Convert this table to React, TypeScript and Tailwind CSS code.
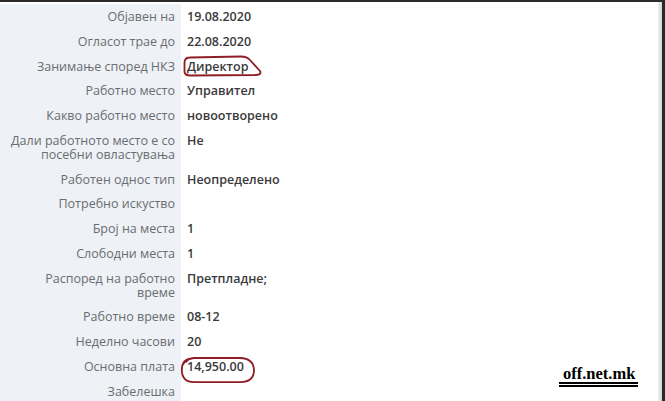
import React from "react";

type Row = { label: string[]; value?: string; mark?: "dir" | "pay" };

const rows: Row[] = [
  { label: ["Објавен на"], value: "19.08.2020" },
  { label: ["Огласот трае до"], value: "22.08.2020" },
  { label: ["Занимање според НКЗ"], value: "Директор", mark: "dir" },
  { label: ["Работно место"], value: "Управител" },
  { label: ["Какво работно место"], value: "новоотворено" },
  { label: ["Дали работното место е со", "посебни овластувања"], value: "Не" },
  { label: ["Работен однос тип"], value: "Неопределено" },
  { label: ["Потребно искуство"] },
  { label: ["Број на места"], value: "1" },
  { label: ["Слободни места"], value: "1" },
  { label: ["Распоред на работно", "време"], value: "Претпладне;" },
  { label: ["Работно време"], value: "08-12" },
  { label: ["Неделно часови"], value: "20" },
  { label: ["Основна плата"], value: "14,950.00", mark: "pay" },
  { label: ["Забелешка"] },
];

function DirMark() {
  return (
    <svg
      className="absolute left-[-5px] top-[-6px] pointer-events-none"
      width="82"
      height="26"
      viewBox="0 0 82 26"
      fill="none"
    >
      <path
        d="M8 3.5 Q3 3.5 2.5 8 L2.5 18 Q3 21.5 8 21.5 L74 21 Q80 20.5 78 17 L68 6 Q65 2.5 59 2.5 L8 3.5"
        stroke="#8e1d24"
        strokeWidth="1.8"
        strokeLinejoin="round"
        strokeLinecap="round"
      />
    </svg>
  );
}

function PayMark() {
  return (
    <svg
      className="absolute left-[-7px] top-[-4px] pointer-events-none"
      width="76"
      height="28"
      viewBox="0 0 76 28"
      fill="none"
    >
      <path
        d="M12 2.5 Q2 3 1.8 14 Q2 26 14 26.2 L60 26.2 Q74 26 74 14 Q73.5 2.3 60 2 L14 2 Q8 2.5 6 6"
        stroke="#8e1d24"
        strokeWidth="1.8"
        strokeLinecap="round"
      />
    </svg>
  );
}

export default function App() {
  return (
    <div
      className="relative w-[665px] h-[401px] overflow-hidden bg-white border-t-2 border-[#2b2b2b]"
      style={{ fontFamily: '"Open Sans", "Noto Sans", sans-serif' }}
    >
      <div className="flex h-full">
        <div className="flex-1 flex flex-col pt-[2px]">
          {rows.map((r, i) => (
            <div key={i} className="flex text-[12.5px] leading-[14px]">
              <div className="w-[181px] shrink-0 bg-[#eef1f5] text-right pr-[6px] pt-[6px] pb-[4.75px] text-[#6a6d72] whitespace-nowrap">
                {r.label[0]}
                {r.label[1] && (
                  <>
                    <br />
                    {r.label[1]}
                  </>
                )}
              </div>
              <div className="pl-[6px] pt-[6px] text-[#3a3a3a] font-semibold">
                {r.value && (
                  <span className="relative inline-block">
                    {r.mark === "dir" && <DirMark />}
                    {r.mark === "pay" && <PayMark />}
                    <span className="relative">{r.value}</span>
                  </span>
                )}
              </div>
            </div>
          ))}
        </div>
        <div className="w-[4px] shrink-0 bg-gradient-to-r from-[#f2f2f2] to-[#d4d4d4]" />
        <div className="w-[3px] shrink-0 bg-[#2b2b2b]" />
      </div>
      <div className="absolute left-[559px] top-[363px] w-[79px] bg-white px-[4px] pt-[1px] border-b-[5px] border-double border-black">
        <div
          className="text-[16.5px] leading-[16px] font-bold text-black text-center"
          style={{ fontFamily: '"Liberation Serif", serif' }}
        >
          off.net.mk
        </div>
      </div>
    </div>
  );
}
